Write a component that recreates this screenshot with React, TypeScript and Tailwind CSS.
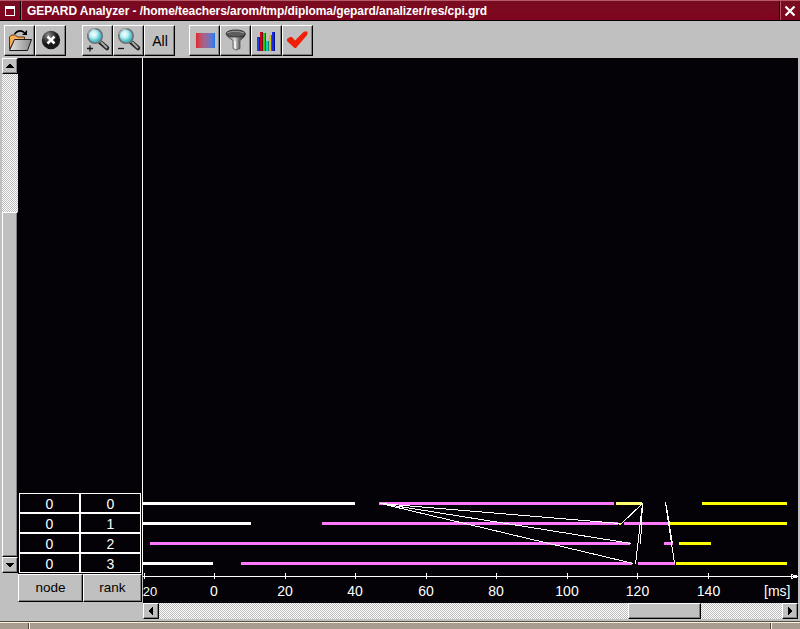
import type { ReactNode } from "react";

const raised = "border border-t-white border-l-white border-r-black border-b-black bg-[#c0c0c0] shadow-[inset_-1px_-1px_0_#808080]";
const trough = "bg-[repeating-conic-gradient(#ffffff_0_25%,#bcbcbc_0_50%)] bg-[length:2px_2px]";

const ToolButton = ({ label, children }: { label: string; children: ReactNode }) => (
  <button aria-label={label} className={`${raised} w-[31px] h-[31px] flex items-center justify-center shrink-0`}>
    {children}
  </button>
);

const OpenIcon = () => (
  <svg width="29" height="29" viewBox="0 0 29 29">
    <path d="M4.500 23V11l2-2h4l2 2h7v5H9Z" fill="#f6ac59" stroke="#5b3210" />
    <path d="m4.500 24.500 5-11h17l-4 11Z" fill="url(#folder)" stroke="#181818" />
    <path d="M9.500 8q4-5 9-2l2 2" fill="none" stroke="#000" strokeWidth="1.5" />
    <path d="M17 9h5V4Z" fill="#000" />
    <defs>
      <linearGradient id="folder" x2="1">
        <stop stopColor="#e4e4e4" />
        <stop offset="1" stopColor="#888" />
      </linearGradient>
    </defs>
  </svg>
);

const CloseIcon = () => (
  <svg width="29" height="29" viewBox="0 0 29 29">
    <defs>
      <radialGradient id="ball" cx=".35" cy=".25">
        <stop stopColor="#909090" />
        <stop offset=".6" stopColor="#3c3c3c" />
        <stop offset="1" stopColor="#181818" />
      </radialGradient>
    </defs>
    <circle cx="15" cy="14" r="9.2" fill="url(#ball)" />
    <path d="m11.500 10.500 7 7m0-7-7 7" stroke="#fff" strokeWidth="2.5" />
  </svg>
);

const ZoomIcon = ({ plus }: { plus?: boolean }) => (
  <svg width="29" height="29" viewBox="0 0 29 29">
    <defs>
      <radialGradient id="lens" cx=".4" cy=".38">
        <stop stopColor="#fff" />
        <stop offset=".5" stopColor="#b8f0f4" />
        <stop offset="1" stopColor="#48bcc8" />
      </radialGradient>
    </defs>
    <path d="m17 16 7 6" stroke="#282828" strokeWidth="4.500" strokeLinecap="round" />
    <path d="m18 16 6 6" stroke="#aaa" strokeWidth="1.8" />
    <path d="m16 16 2-2" stroke="#20d8e8" strokeWidth="2" />
    <circle cx="12" cy="10" r="7.2" fill="url(#lens)" stroke="#707070" strokeWidth="1.6" />
    <path d="M5.500 8a7 7 0 0 1 7-5" fill="none" stroke="#ccc" />
    <path d={plus ? "M4 22.500h6m-3-3v6" : "M4 22.500h6"} stroke="#181818" strokeWidth="1.3" />
  </svg>
);

const FunnelIcon = () => (
  <svg width="29" height="29" viewBox="0 0 29 29">
    <defs>
      <linearGradient id="metal" x2="1">
        <stop stopColor="#383838" />
        <stop offset=".45" stopColor="#ddd" />
        <stop offset=".65" stopColor="#777" />
        <stop offset="1" stopColor="#222" />
      </linearGradient>
    </defs>
    <path d="M5 8q1 3 7 6.500v8l3 1.500 4-1.500v-8Q24 11 24.500 8Z" fill="url(#metal)" stroke="#444" strokeWidth=".7" />
    <path d="M13 15v7l2 1v-8Z" fill="#eee" />
    <ellipse cx="14.700" cy="7.500" rx="9.500" ry="3.500" fill="#5c5c5c" stroke="#343434" />
    <path d="M6 7q8-3.500 17 0" fill="none" stroke="#999" />
  </svg>
);

const chartBars = [
  { x: 5, top: 11, color: "#1048e0", side: "#082888" },
  { x: 8, top: 6, color: "#d80018", side: "#780010" },
  { x: 11, top: 7, color: "#18d010", side: "#087008" },
  { x: 14, top: 15, color: "#18d0c8", side: "#088080" },
  { x: 17, top: 9, color: "#d0c018", side: "#686008" },
  { x: 20, top: 6, color: "#1828e8", side: "#001088" },
];

const BarsIcon = () => (
  <svg width="29" height="29" viewBox="0 0 29 29" shapeRendering="crispEdges">
    {chartBars.map((b) => (
      <g key={b.x}>
        <rect x={b.x} y={b.top} width="2" height={25 - b.top} fill={b.color} />
        <rect x={b.x + 2} y={b.top} width="1" height={25 - b.top} fill={b.side} />
      </g>
    ))}
  </svg>
);

const Arrow = ({ d }: { d: string }) => (
  <button aria-label="scroll" className={`${raised} w-4 h-4 flex items-center justify-center shrink-0`}>
    <svg width="8" height="8" viewBox="0 0 8 8" shapeRendering="crispEdges">
      <path d={d} fill="#000" />
    </svg>
  </button>
);

const M = "#ff78ff";
const Y = "#ffff00";
const W = "#ffffff";

// [x1, x2, y, color]
const bars: [number, number, number, string][] = [
  [143, 355, 502, W],
  [379, 614, 502, M],
  [616, 642, 502, "#ffff70"],
  [702, 787, 502, Y],
  [143, 251, 522, W],
  [322, 618, 522, M],
  [624, 668, 522, M],
  [670, 787, 522, Y],
  [150, 630, 542, M],
  [664, 673, 542, M],
  [679, 711, 542, Y],
  [143, 213, 562, W],
  [241, 632, 562, M],
  [638, 675, 562, M],
  [676, 787, 562, Y],
];

const messages = [
  [380, 503, 619, 523],
  [380, 503, 631, 543],
  [380, 503, 633, 563],
  [642, 503, 620, 524],
  [642, 503, 640, 544],
  [642, 503, 635, 564],
  [665, 502, 669, 523],
  [665, 502, 672, 543],
  [665, 502, 674, 563],
];

// [tick x, label, label x]
const ticks = [
  [144, 20, 150],
  [214, 0, 214],
  [285, 20, 285],
  [355, 40, 355],
  [426, 60, 426],
  [496, 80, 496],
  [567, 100, 567],
  [637, 120, 637.5],
  [708, 140, 708.5],
];

const Timeline = () => (
  <svg width="655" height="545" viewBox="143 58 655 545" className="block shrink-0 bg-[#040206]" shapeRendering="crispEdges">
    {bars.map(([x1, x2, y, color]) => (
      <rect key={`${x1}-${y}`} x={x1} y={y} width={x2 - x1} height="3" fill={color} />
    ))}
    {messages.map(([x1, y1, x2, y2], i) => (
      <line key={i} x1={x1 + 0.5} y1={y1 + 0.5} x2={x2 + 0.5} y2={y2 + 0.5} stroke="#fff" />
    ))}
    <rect x="619" y="523" width="2" height="2" fill="#ffff70" />
    <rect x="143" y="576" width="655" height="1" fill="#fff" />
    <path d="M791 574h2v1h4v3h-4v1h-2z" fill="#fff" />
    <rect x="792" y="575" width="1" height="1" fill="#000" />
    <rect x="792" y="577" width="1" height="1" fill="#000" />
    {ticks.map(([x, label, labelX]) => (
      <g key={x}>
        <rect x={x} y="573" width="1" height="6" fill="#fff" />
        <text
          x={labelX}
          y="596"
          fill="#fff"
          fontSize={x === 144 ? 13 : 14}
          textAnchor="middle"
          className="font-['Liberation_Sans',sans-serif]"
        >
          {label}
        </text>
      </g>
    ))}
    <text x="764" y="596" fill="#fff" fontSize="14" className="font-['Liberation_Sans',sans-serif]">
      [ms]
    </text>
  </svg>
);

const TitleBar = () => (
  <div className="h-[21px] flex shrink-0 border-t border-t-[#b85868] border-b border-b-black bg-linear-to-b from-[#780c20] to-[#800420] text-white">
    <div className="w-[21px] flex items-center justify-center border-r border-black">
      <div className="w-[10px] h-[10px] border border-t-[3px] border-white" />
    </div>
    <div className="flex-1 border-l border-[#b85868] pl-[5px] pt-px text-[12px] leading-[18px] font-bold tracking-[-0.07px] whitespace-nowrap">
      GEPARD Analyzer - /home/teachers/arom/tmp/diploma/gepard/analizer/res/cpi.grd
    </div>
    <div className="w-[20px] flex items-center justify-center border-l border-[#b85868] pr-[2px] shadow-[-1px_0_0_#000]">
      <svg width="12" height="12" viewBox="0 0 12 12">
        <path d="m1.500 1.500 9 9m0-9-9 9" stroke="#fff" strokeWidth="2.2" />
      </svg>
    </div>
  </div>
);

const Toolbar = () => (
  <div className="h-[37px] flex shrink-0 pt-1 pl-1">
    <ToolButton label="Open"><OpenIcon /></ToolButton>
    <ToolButton label="Close"><CloseIcon /></ToolButton>
    <div className="w-4 shrink-0" />
    <ToolButton label="Zoom in"><ZoomIcon plus /></ToolButton>
    <ToolButton label="Zoom out"><ZoomIcon /></ToolButton>
    <ToolButton label="Show all"><span className="pt-px pl-px text-[14px]">All</span></ToolButton>
    <div className="w-[14px] shrink-0" />
    <ToolButton label="Colors">
      <div className="ml-[2px] w-[19px] h-[15px] bg-linear-to-r from-[#e02028] to-[#1078f0]" />
    </ToolButton>
    <ToolButton label="Filter"><FunnelIcon /></ToolButton>
    <ToolButton label="Statistics"><BarsIcon /></ToolButton>
    <ToolButton label="Apply">
      <svg width="29" height="29" viewBox="0 0 29 29">
        <path d="M4 15v-2l3-2h2l3 3.500L21 5.500h3.500v3L13 22h-1.500Z" fill="#f02008" />
      </svg>
    </ToolButton>
  </div>
);

export default function App() {
  return (
    <div className="w-[800px] h-[629px] flex flex-col overflow-hidden bg-[#c0c0c0] text-black font-['Liberation_Sans',sans-serif]">
      <TitleBar />
      <Toolbar />
      <div className="h-[545px] flex shrink-0 pl-[2px]">
        <div className={`${trough} w-4 h-[515px] flex flex-col shrink-0`}>
          <Arrow d="M3 2h2v1h1v1h1v1h1v1H0V5h1V4h1V3h1z" />
          <div className="h-[138px]" />
          <div className={`${raised} flex-1`} />
          <Arrow d="M0 2h8v1H7v1H6v1H5v1H3V5H2V4H1V3H0z" />
        </div>
        <div className="w-[124px] flex flex-col shrink-0">
          <div className="h-[516px] flex flex-col justify-end bg-[#040206] pl-px pb-px">
            {[0, 1, 2, 3].map((rank) => (
              <div key={rank} className="flex w-[122px] h-5 text-white text-[14px] leading-[20px] text-center">
                <div className="w-[61px] border border-white">0</div>
                <div className="w-[61px] border border-white">{rank}</div>
              </div>
            ))}
          </div>
          <div className="flex h-[28px] text-[13.5px]">
            <button className={`${raised} w-[65px]`}>node</button>
            <button className={`${raised} w-[59px]`}>rank</button>
          </div>
        </div>
        <div className="w-px h-[516px] bg-white shrink-0" />
        <Timeline />
      </div>
      <div className="h-[18px] shrink-0 pl-[143px] pr-[2px]">
        <div className={`${trough} h-4 flex`}>
          <Arrow d="M5 0h1v8H5V7H4V6H3V5H2V3h1V2h1V1h1z" />
          <div className="w-[469px]" />
          <div className={`${raised} w-[73px]`} />
          <div className="flex-1" />
          <Arrow d="M2 0h1v1h1v1h1v1h1v2H5v1H4v1H3v1H2z" />
        </div>
      </div>
      <div className="flex-1 flex bg-[#a89c90] border-t border-[#585048] shadow-[inset_0_1px_0_#fff0dc]">
        <div className="w-[29px] mt-px border-r border-[#504840]" />
        <div className="w-[742px] mt-px border-l border-[#fff0dc] border-r border-r-[#504840]" />
        <div className="flex-1 mt-px border-l border-[#fff0dc]" />
      </div>
    </div>
  );
}
